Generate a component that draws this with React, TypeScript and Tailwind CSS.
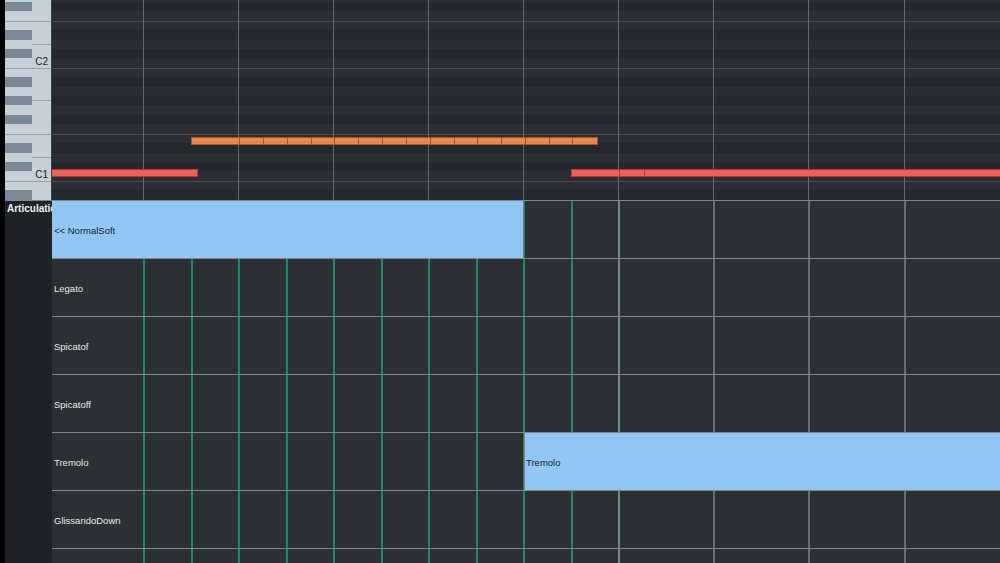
import React from "react";

type KeyRow = { name: string; black: boolean; h?: number };

// top -> bottom, one row per semitone
const keyRows: KeyRow[] = [
  { name: "G2", black: false, h: 2 },
  { name: "F#2", black: true },
  { name: "F2", black: false },
  { name: "E2", black: false },
  { name: "D#2", black: true },
  { name: "D2", black: false },
  { name: "C#2", black: true },
  { name: "C2", black: false },
  { name: "B1", black: false },
  { name: "A#1", black: true },
  { name: "A1", black: false },
  { name: "G#1", black: true },
  { name: "G1", black: false },
  { name: "F#1", black: true },
  { name: "F1", black: false },
  { name: "E1", black: false },
  { name: "D#1", black: true },
  { name: "D1", black: false },
  { name: "C#1", black: true },
  { name: "C1", black: false },
  { name: "B0", black: false },
  { name: "A#0", black: true },
];

const GRID_X = 52;

// bar lines in the note editor (absolute x)
const topLines = [143, 238, 333, 428, 523, 618, 713, 808, 904];

// lines in the articulation lane
const laneLines: { x: number; c: "g" | "m" | "n" }[] = [
  { x: 143, c: "g" },
  { x: 191, c: "g" },
  { x: 238, c: "g" },
  { x: 286, c: "g" },
  { x: 333, c: "g" },
  { x: 381, c: "g" },
  { x: 428, c: "g" },
  { x: 476, c: "g" },
  { x: 523, c: "g" },
  { x: 571, c: "g" },
  { x: 618, c: "m" },
  { x: 713, c: "n" },
  { x: 808, c: "n" },
  { x: 904, c: "n" },
];

const orangeCuts = [191, 239, 263, 287, 311, 334, 358, 382, 406, 430, 454, 477, 501, 525, 549, 572, 597];
const redCuts = [571, 619, 644, 1004];

function isLineRow(name: string) {
  return name.startsWith("E") || name.startsWith("B");
}

function Keyboard() {
  return (
    <div className="w-[47px] h-full flex flex-col border-r border-[#3b4046] bg-[#c7cfd8] overflow-hidden">
      {keyRows.map((r) => {
        const mid = (r.name.startsWith("D") && !r.name.includes("#")) || r.name.startsWith("G#");
        const isC = r.name.startsWith("C") && !r.name.includes("#");
        return (
          <div
            key={r.name}
            className={
              "flex shrink-0 " +
              (r.h ? "h-[2px] " : "h-[9.42px] ") +
              (isLineRow(r.name) ? "border-t border-[#98a2ac]" : "")
            }
          >
            <div className={"w-[27px] h-full " + (r.black ? "bg-[#7b8997]" : "")} />
            <div className="flex-1 h-full relative flex items-center justify-end">
              {mid && <div className="absolute left-0 right-0 h-px bg-[#9aa4ae]" />}
              {isC && (
                <span className="pr-[3px] -translate-y-[1px] text-[10px] leading-none text-[#1d2024]">
                  {r.name}
                </span>
              )}
            </div>
          </div>
        );
      })}
    </div>
  );
}

function NoteGrid() {
  return (
    <div className="flex-1 h-full relative overflow-hidden">
      <div className="flex flex-col h-full">
        {keyRows.map((r) => (
          <div
            key={r.name}
            className={
              "shrink-0 " +
              (r.h ? "h-[2px] " : "h-[9.42px] ") +
              (r.black ? "bg-[#24272c] " : "bg-[#2b2e34] ") +
              (isLineRow(r.name) ? "border-t border-[#474c53]" : "")
            }
          />
        ))}
      </div>
      <div className="absolute inset-0 flex pointer-events-none">
        {topLines.map((x, i) => (
          <React.Fragment key={x}>
            <div className="shrink-0" style={{ width: x - (i === 0 ? GRID_X : topLines[i - 1] + 1) }} />
            <div className="w-px h-full bg-[#62676e]" />
          </React.Fragment>
        ))}
      </div>
      {/* notes */}
      <div className="absolute top-[137px] h-[8px] left-0 right-0">
        <div className="relative h-full">
          <div className="absolute inset-y-0 flex" style={{ left: orangeCuts[0] - GRID_X }}>
            {orangeCuts.slice(1).map((x, i) => (
              <div
                key={i}
                className="h-full bg-[#e9874e] border border-[#a3552e] -ml-px first:ml-0"
                style={{ width: x - orangeCuts[i] + 1 }}
              />
            ))}
          </div>
        </div>
      </div>
      <div className="absolute top-[169px] h-[8px] left-0 right-0">
        <div className="relative h-full">
          <div className="absolute inset-y-0 left-[-2px] w-[148px] bg-[#ef605b] border border-[#b03b39]" />
          <div className="absolute inset-y-0 flex" style={{ left: redCuts[0] - GRID_X }}>
            {redCuts.slice(1).map((x, i) => (
              <div
                key={i}
                className="h-full bg-[#ef605b] border border-[#b03b39] -ml-px first:ml-0"
                style={{ width: x - redCuts[i] + 1 }}
              />
            ))}
          </div>
        </div>
      </div>
    </div>
  );
}

const lanes = ["NormalSoft", "Legato", "Spicatof", "Spicatoff", "Tremolo", "GlissandoDown", ""];

function LaneRow({ name, index }: { name: string; index: number }) {
  const label = (
    <span className="pl-[2px] pt-[3px] text-[9.5px] text-[#e6e8ea] whitespace-nowrap">{name}</span>
  );
  if (index === 0) {
    return (
      <div className="h-[58px] shrink-0 flex border-b border-[#80868c]">
        <div className="w-[472px] h-full flex items-center bg-[#93c6f4] border-r border-[#6e7b88]">
          <span className="pl-[2px] pt-[3px] text-[9.5px] text-[#15243a] whitespace-nowrap">
            &lt;&lt; NormalSoft
          </span>
        </div>
      </div>
    );
  }
  if (name === "Tremolo") {
    return (
      <div className="h-[58px] shrink-0 flex border-b border-[#80868c]">
        <div className="w-[472px] h-full flex items-center">{label}</div>
        <div className="flex-1 h-full flex items-center bg-[#93c6f4] border-l border-[#7c8792]">
          <span className="pl-[1px] pt-[3px] text-[9.5px] text-[#15243a] whitespace-nowrap">Tremolo</span>
        </div>
      </div>
    );
  }
  return (
    <div className="h-[58px] shrink-0 flex items-center border-b border-[#80868c]">{label}</div>
  );
}

function ArticulationLane() {
  const lineColor = { g: "bg-[#22855e]", m: "bg-[#6c8a7e]", n: "bg-[#696e74]" };
  return (
    <div className="flex-1 h-full relative overflow-hidden bg-[#2c2f33]">
      <div className="absolute inset-0 flex">
        {laneLines.map((l, i) => (
          <React.Fragment key={l.x}>
            <div
              className="shrink-0"
              style={{ width: l.x - (i === 0 ? GRID_X : laneLines[i - 1].x + 2) }}
            />
            <div className={"w-[2px] h-full " + lineColor[l.c]} />
          </React.Fragment>
        ))}
      </div>
      <div className="relative flex flex-col">
        {lanes.map((n, i) => (
          <LaneRow key={i} name={n} index={i} />
        ))}
      </div>
    </div>
  );
}

export default function App() {
  return (
    <div className="w-[1000px] h-[563px] bg-black flex overflow-hidden font-['Liberation_Sans',Arial,sans-serif]">
      <div className="w-[5px] shrink-0 bg-black" />
      <div className="flex-1 flex flex-col min-w-0">
        <div className="h-[200px] shrink-0 flex">
          <Keyboard />
          <NoteGrid />
        </div>
        <div className="flex-1 flex border-t border-[#7f868e] min-h-0">
          <div className="w-[47px] shrink-0 bg-[#1f2226] overflow-hidden">
            <div className="pl-[2px] text-[10px] font-bold text-[#f2f2f2] whitespace-nowrap">
              Articulation
            </div>
          </div>
          <ArticulationLane />
        </div>
      </div>
    </div>
  );
}
